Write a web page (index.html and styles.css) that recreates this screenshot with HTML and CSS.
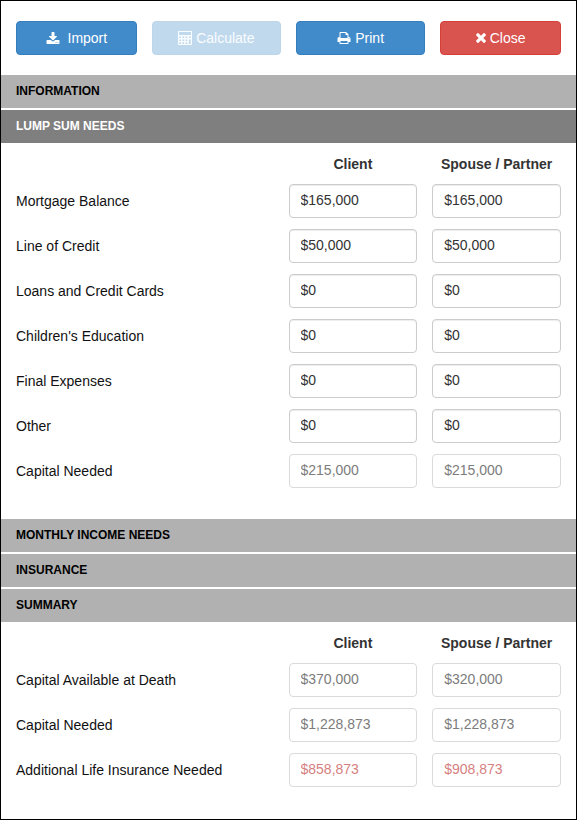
FILE: index.html
```html
<!DOCTYPE html>
<html lang="en">
<head>
    <meta charset="UTF-8">
    <meta name="viewport" content="width=device-width, initial-scale=1.0">
    <title>Insurance Needs Analysis</title>
    <link rel="stylesheet" href="styles.css">
</head>
<body>
    <form class="panel">
        <div class="toolbar">
            <button type="button" class="btn btn-primary btn-import">
                <svg class="icon" width="14" height="12" viewBox="0 0 1664 1536" aria-hidden="true"><path d="M1280 1344q0-26-19-45t-45-19-45 19-19 45 19 45 45 19 45-19 19-45zm256 0q0-26-19-45t-45-19-45 19-19 45 19 45 45 19 45-19 19-45zm128-224v320q0 40-28 68t-68 28h-1472q-40 0-68-28t-28-68v-320q0-40 28-68t68-28h465l135 136q58 56 136 56t136-56l136-136h464q40 0 68 28t28 68zm-325-569q17 41-14 70l-448 448q-18 19-45 19t-45-19l-448-448q-31-29-14-70 17-39 59-39h256v-448q0-26 19-45t45-19h256q26 0 45 19t19 45v448h256q42 0 59 39z"/></svg>
                Import
            </button>
            <button type="button" class="btn btn-primary" disabled>
                <svg class="icon" width="14" height="14" viewBox="0 0 14 14" aria-hidden="true"><path fill-rule="evenodd" d="M.7 0h12.6q.7 0 .7.7v12.6q0 .7-.7.7H.7q-.7 0-.7-.7V.7Q0 0 .7 0zM1 1v3h12V1zM1.2 5.4v1.6h1.8v-1.6zM4.4 5.4v1.6h1.8v-1.6zM7.6 5.4v1.6h1.8v-1.6zM10.9 5.4v1.6h1.8v-1.6zM1.2 8.4v1.6h1.8v-1.6zM4.4 8.4v1.6h1.8v-1.6zM7.6 8.4v1.6h1.8v-1.6zM1.2 11.3v1.6h1.8v-1.6zM4.4 11.3v1.6h1.8v-1.6zM7.6 11.3v1.6h1.8v-1.6zM10.9 8.4v4.5h1.8V8.4z"/></svg>
                Calculate
            </button>
            <button type="button" class="btn btn-primary">
                <svg class="icon" width="14" height="12" viewBox="0 128 1664 1536" aria-hidden="true"><path d="M384 1536h896v-256h-896v256zm0-640h896v-384h-160q-40 0-68-28t-28-68v-160h-640v640zm1152 64q0-26-19-45t-45-19-45 19-19 45 19 45 45 19 45-19 19-45zm128 0v416q0 13-9.5 22.5t-22.5 9.5h-224v160q0 40-28 68t-68 28h-960q-40 0-68-28t-28-68v-160h-224q-13 0-22.5-9.5t-9.5-22.5v-416q0-79 56.5-135.5t135.5-56.5h64v-544q0-40 28-68t68-28h672q40 0 88 20t76 48l152 152q28 28 48 76t20 88v256h64q79 0 135.5 56.5t56.5 135.5z"/></svg>
                Print
            </button>
            <button type="button" class="btn btn-danger">
                <svg class="icon" width="10" height="10" viewBox="302 366 1188 1188" aria-hidden="true"><path d="M1490 1322q0 40-28 68l-136 136q-28 28-68 28t-68-28l-294-294-294 294q-28 28-68 28t-68-28l-136-136q-28-28-28-68t28-68l294-294-294-294q-28-28-28-68t28-68l136-136q28-28 68-28t68 28l294 294 294-294q28-28 68-28t68 28l136 136q28 28 28 68t-28 68l-294 294 294 294q28 28 28 68z"/></svg>
                Close
            </button>
        </div>

        <button type="button" class="section-title">INFORMATION</button>
        <button type="button" class="section-title active">LUMP SUM NEEDS</button>
        <div class="section">
            <div class="row heading">
                <span class="client">Client</span>
                <span>Spouse / Partner</span>
            </div>
            <div class="row">
                <label for="mortgage">Mortgage Balance</label>
                <input type="text" id="mortgage" value="$165,000">
                <input type="text" aria-label="Mortgage Balance, Spouse / Partner" value="$165,000">
            </div>
            <div class="row">
                <label for="credit">Line of Credit</label>
                <input type="text" id="credit" value="$50,000">
                <input type="text" aria-label="Line of Credit, Spouse / Partner" value="$50,000">
            </div>
            <div class="row">
                <label for="loans">Loans and Credit Cards</label>
                <input type="text" id="loans" value="$0">
                <input type="text" aria-label="Loans and Credit Cards, Spouse / Partner" value="$0">
            </div>
            <div class="row">
                <label for="education">Children's Education</label>
                <input type="text" id="education" value="$0">
                <input type="text" aria-label="Children's Education, Spouse / Partner" value="$0">
            </div>
            <div class="row">
                <label for="final">Final Expenses</label>
                <input type="text" id="final" value="$0">
                <input type="text" aria-label="Final Expenses, Spouse / Partner" value="$0">
            </div>
            <div class="row">
                <label for="other">Other</label>
                <input type="text" id="other" value="$0">
                <input type="text" aria-label="Other, Spouse / Partner" value="$0">
            </div>
            <div class="row">
                <label for="lump-capital">Capital Needed</label>
                <input type="text" id="lump-capital" value="$215,000" disabled>
                <input type="text" aria-label="Capital Needed, Spouse / Partner" value="$215,000" disabled>
            </div>
        </div>

        <button type="button" class="section-title">MONTHLY INCOME NEEDS</button>
        <button type="button" class="section-title">INSURANCE</button>
        <button type="button" class="section-title">SUMMARY</button>
        <div class="section">
            <div class="row heading">
                <span class="client">Client</span>
                <span>Spouse / Partner</span>
            </div>
            <div class="row">
                <label for="available">Capital Available at Death</label>
                <input type="text" id="available" value="$370,000" disabled>
                <input type="text" aria-label="Capital Available at Death, Spouse / Partner" value="$320,000" disabled>
            </div>
            <div class="row">
                <label for="capital">Capital Needed</label>
                <input type="text" id="capital" value="$1,228,873" disabled>
                <input type="text" aria-label="Capital Needed, Spouse / Partner" value="$1,228,873" disabled>
            </div>
            <div class="row">
                <label for="additional">Additional Life Insurance Needed</label>
                <input type="text" class="shortfall" id="additional" value="$858,873" disabled>
                <input type="text" class="shortfall" aria-label="Additional Life Insurance Needed, Spouse / Partner" value="$908,873" disabled>
            </div>
        </div>
    </form>
</body>
</html>
```
FILE: styles.css
```css
* {
    box-sizing: border-box;
}
body {
    margin: 0;
    background-color: #fff;
    color: #111;
    font-family: "Liberation Sans", Arial, sans-serif;
    font-size: 14px;
    line-height: 20px;
}
button, input {
    font-family: inherit;
    font-size: 14px;
    line-height: 20px;
}
.panel {
    min-height: 100vh;
    border: 1px solid #000;
}
.toolbar {
    display: grid;
    grid-template-columns: 14fr 15fr 15fr 14fr;
    gap: 15px;
    padding: 20px 15px;
}
.btn {
    display: flex;
    align-items: center;
    justify-content: center;
    gap: 4px;
    height: 34px;
    padding: 0;
    border: 1px solid;
    border-radius: 4px;
    color: #fff;
    cursor: pointer;
}
.btn-import {
    gap: 8px;
}
.btn-primary {
    background-color: #428bca;
    border-color: #357ebd;
}
.btn-danger {
    background-color: #d9534f;
    border-color: #d43f3a;
}
.btn:disabled {
    background-color: #c1d9ed;
    border-color: #bdd6ea;
    color: #fafdff;
    cursor: not-allowed;
}
.icon {
    fill: currentColor;
}
.section-title {
    display: block;
    width: 100%;
    height: 33px;
    margin-bottom: 2px;
    padding: 0 15px 1px;
    border: none;
    background-color: #b1b1b1;
    color: #000;
    font-size: 12px;
    font-weight: bold;
    text-align: left;
    cursor: pointer;
}
.section-title.active {
    background-color: #7f7f7f;
    color: #fff;
}
.section {
    padding: 9px 15px 31px;
}
.row {
    display: grid;
    grid-template-columns: 2fr 1fr 1fr;
    column-gap: 15px;
    margin-bottom: 11px;
}
.row:last-child {
    margin-bottom: 0;
}
.row label {
    padding-top: 7px;
}
.heading {
    margin-bottom: 10px;
    color: #333;
    font-weight: bold;
    text-align: center;
}
.heading .client {
    grid-column: 2;
}
.row input {
    width: 100%;
    height: 34px;
    padding: 5px 11px 7px;
    border: 1px solid #ccc;
    border-radius: 4px;
    background-color: #fff;
    box-shadow: inset 0 1px 1px rgba(0, 0, 0, 0.075);
    color: #333;
}
.row input:disabled {
    border-color: #dadada;
    box-shadow: none;
    color: #7c7c7c;
}
.row input.shortfall {
    color: #d67f7f;
}
```
